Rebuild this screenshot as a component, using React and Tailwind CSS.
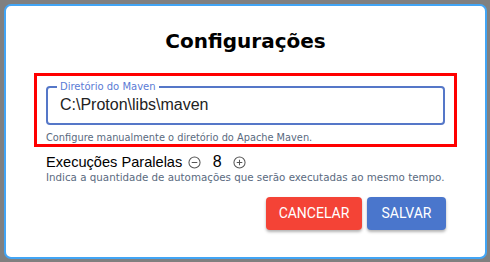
import { useEffect, useRef, useState } from 'react'

function MinusCircle({ className }) {
  return (
    <svg viewBox="0 0 14 14" className={className} fill="none" stroke="currentColor" strokeWidth="1.1">
      <circle cx="7" cy="7" r="6" />
      <path d="M4 7h6" />
    </svg>
  )
}

function PlusCircle({ className }) {
  return (
    <svg viewBox="0 0 14 14" className={className} fill="none" stroke="currentColor" strokeWidth="1.1">
      <circle cx="7" cy="7" r="6" />
      <path d="M4 7h6M7 4v6" />
    </svg>
  )
}

export default function App() {
  const [mavenDir, setMavenDir] = useState('C:\\Proton\\libs\\maven')
  const [parallel, setParallel] = useState(8)
  const inputRef = useRef(null)

  useEffect(() => {
    const el = inputRef.current
    if (el) {
      el.focus()
      el.setSelectionRange(el.value.length, el.value.length)
    }
  }, [])

  return (
    <div className="h-[262px] w-[490px] bg-[#808080] pl-[4px] pt-[4px] pr-[3px] pb-[3px] font-['DejaVu_Sans',sans-serif]">
      <div className="flex h-full flex-col rounded-[7px] border-2 border-[#42a5f5] bg-white">
        <h1 className="mt-[23px] text-center text-[20px] font-bold leading-[24px] text-black">Configurações</h1>

        <div className="ml-[28px] mr-[28px] mt-[20px] border-[3px] border-[#ff0000] px-[9px]">
          <fieldset className="mt-[5px] rounded-[4px] border-2 border-[#5577c8] pl-[12px] pr-[12px] pb-[6px]">
            <legend className="ml-[-3px] px-[3px] text-[10px] leading-[12px] text-[#5b7bd5]">Diretório do Maven</legend>
            <input
              ref={inputRef}
              value={mavenDir}
              onChange={(e) => setMavenDir(e.target.value)}
              className="w-full bg-transparent font-['Liberation_Sans',sans-serif] text-[16px] leading-[20px] text-[#222] caret-black outline-none"
            />
          </fieldset>
          <p className="mt-[7px] text-[9.8px] leading-[12px] text-[#5a6a80]">Configure manualmente o diretório do Apache Maven.</p>
        </div>

        <div className="ml-[40px] mt-[6px] flex items-center text-[14.6px] leading-[18px] text-black">
          <span className="font-['Liberation_Sans',sans-serif]">Execuções Paralelas</span>
          <button onClick={() => setParallel((p) => Math.max(1, p - 1))} className="ml-[6px] text-[#555]">
            <MinusCircle className="h-[13px] w-[13px]" />
          </button>
          <span className="w-[32px] text-center font-['Liberation_Sans',sans-serif] text-[16px]">{parallel}</span>
          <button onClick={() => setParallel((p) => p + 1)} className="text-[#555]">
            <PlusCircle className="h-[13px] w-[13px]" />
          </button>
        </div>
        <p className="ml-[40px] text-[10.3px] leading-[12px] text-[#5a6a80]">
          Indica a quantidade de automações que serão executadas ao mesmo tempo.
        </p>

        <div className="mr-[39px] mt-[14px] flex justify-end gap-[5px] font-['Roboto',sans-serif]">
          <button className="h-[33px] w-[96px] rounded-[4px] bg-[#f44336] text-[14px] text-white shadow-[0_2px_3px_rgba(0,0,0,0.3)]">
            CANCELAR
          </button>
          <button className="h-[33px] w-[79px] rounded-[4px] bg-[#4a76cc] text-[14px] text-white shadow-[0_2px_3px_rgba(0,0,0,0.3)]">
            SALVAR
          </button>
        </div>
      </div>
    </div>
  )
}
